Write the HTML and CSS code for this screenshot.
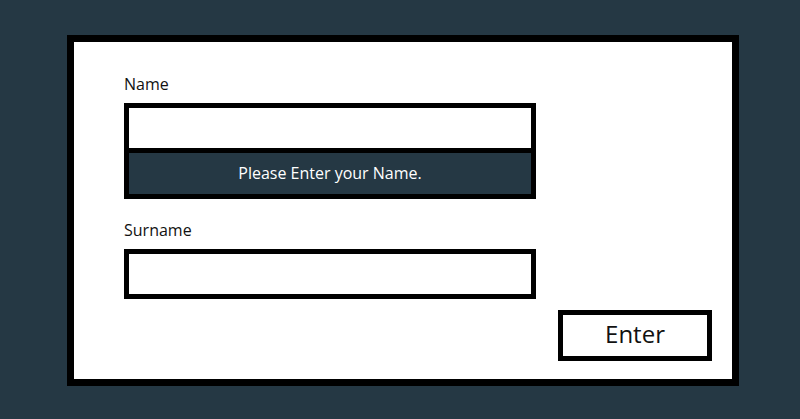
FILE: index.html
```html
<!DOCTYPE html>
<html lang="en">
<head>
    <meta charset="UTF-8">
    <title>Form</title>
    <link rel="stylesheet" href="styles.css">
</head>
<body>

<div class="card">
    <div class="label">Name</div>
    <div class="box">
        <input type="text" name="name">
        <div class="msg">Please Enter your Name.</div>
    </div>

    <div class="label second">Surname</div>
    <div class="box">
        <input type="text" name="surname">
    </div>

    <input class="enter" type="button" value="Enter">
</div>

</body>
</html>
```

FILE: styles.css
```css
* {
    padding: 0;
    margin: 0;
    box-sizing: border-box;
}
html, body {
    height: 100%;
}
body {
    background: #253844;
    font-family: "Open Sans", "Liberation Sans", sans-serif;
    padding-top: 35px;
    padding-left: 67px;
}
.card {
    width: 672px;
    height: 351px;
    border: 7px solid #000;
    background: #fff;
    display: flex;
    flex-direction: column;
    padding: 31px 20px 0 50px;
}
.label {
    font-size: 16px;
    line-height: 22px;
    color: #111;
    margin-bottom: 8px;
}
.label.second {
    margin-top: 20px;
}
.box {
    width: 412px;
    border: 5px solid #000;
}
.box input {
    display: block;
    width: 100%;
    height: 40px;
    border: none;
    outline: none;
    font-size: 16px;
    padding-left: 8px;
    background: #fff;
}
.msg {
    height: 46px;
    line-height: 41px;
    border-top: 5px solid #000;
    background: #253844;
    color: #fff;
    text-align: center;
    font-size: 16px;
}
.enter {
    align-self: flex-end;
    width: 154px;
    height: 51px;
    margin-top: 11px;
    border: 5px solid #000;
    background: #fff;
    color: #111;
    font-family: "Open Sans", "Liberation Sans", sans-serif;
    font-size: 24px;
    line-height: 38px;
    padding-bottom: 3px;
    cursor: pointer;
}
```
